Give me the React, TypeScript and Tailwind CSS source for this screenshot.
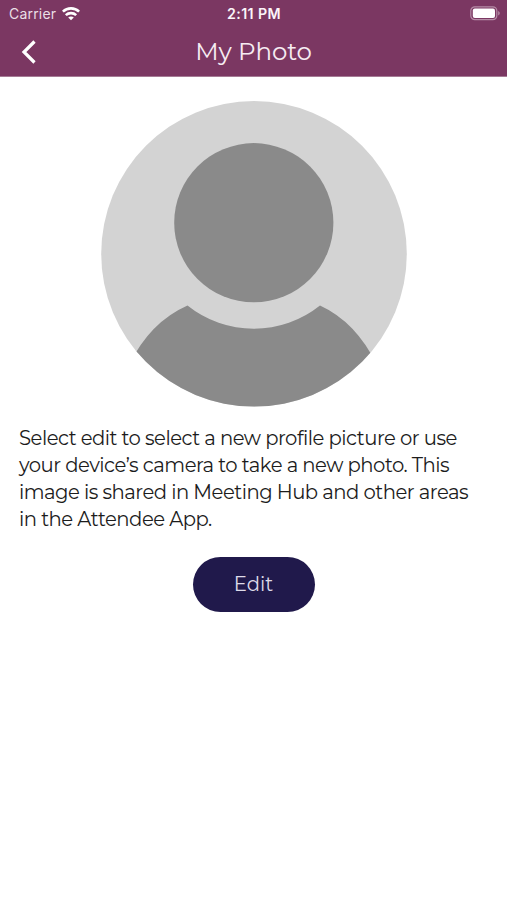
const description = [
  'Select edit to select a new profile picture or use',
  'your device’s camera to take a new photo. This',
  'image is shared in Meeting Hub and other areas',
  'in the Attendee App.',
]

function WifiIcon() {
  return (
    <svg width="18" height="14" viewBox="0 0 18 14" fill="none" stroke="white" strokeWidth="2.6">
      <path d="M0.9 4.6C5.4 0.3 12.6 0.3 17.1 4.6" />
      <path d="M3.8 8.1C6.7 5.4 11.3 5.4 14.2 8.1" />
      <path d="M9 13.3L6.2 10.5C7.8 9 10.2 9 11.8 10.5Z" fill="white" stroke="none" />
    </svg>
  )
}

function BatteryIcon() {
  return (
    <svg width="30" height="15" viewBox="0 0 30 15" fill="none">
      <rect x="0.8" y="0.8" width="26" height="12.9" rx="4" stroke="#b58ca6" strokeWidth="1.2" />
      <rect x="2.8" y="2.6" width="22.2" height="9.4" rx="2" fill="white" />
      <path d="M28.2 5C30.2 5.9 30.2 8.6 28.2 9.5Z" fill="#b58ca6" />
    </svg>
  )
}

function StatusBar() {
  return (
    <div className="grid h-[27px] grid-cols-3 items-center pl-[9px] pr-[7px] font-[Inter,sans-serif] text-white">
      <div className="flex items-center gap-[6px]">
        <span className="text-[14px] leading-none tracking-[0.2px] text-[#eadfe6]">Carrier</span>
        <WifiIcon />
      </div>
      <span className="-ml-px pt-px text-center text-[14.2px] font-semibold leading-none tracking-[0.4px] text-[#fbf5f9]">2:11 PM</span>
      <div className="flex justify-end">
        <BatteryIcon />
      </div>
    </div>
  )
}

function Avatar() {
  return (
    <svg className="mx-auto block" width="306" height="306" viewBox="0 0 306 306">
      <defs>
        <clipPath id="avatar">
          <circle cx="153" cy="152.8" r="152.8" />
        </clipPath>
      </defs>
      <g clipPath="url(#avatar)">
        <rect width="306" height="306" fill="#d3d3d3" />
        <circle cx="152.8" cy="121.7" r="79.6" fill="#8a8a8a" />
        <path d="M28 264Q49 221 86.5 204.5A106 106 0 0 0 219 204.5Q255 221 276 264V306H28Z" fill="#8a8a8a" />
      </g>
    </svg>
  )
}

export default function App() {
  return (
    <div className="h-[900px] w-[507px] overflow-hidden bg-white font-[Montserrat,Inter,sans-serif]">
      <header className="h-[77px] border-b border-[#a57b95] bg-[#7b3762]">
        <StatusBar />
        <div className="grid h-[49px] grid-cols-[48px_1fr_48px] items-center">
          <button className="pl-[21px]" aria-label="Back">
            <svg width="15" height="24" viewBox="0 0 15 24" fill="none" stroke="white" strokeWidth="3.2">
              <path d="M13.5 1.5L3 12L13.5 22.5" />
            </svg>
          </button>
          <h1 className="text-center text-[24.5px] leading-none tracking-[-0.1px] text-[#f6ecf2]">My Photo</h1>
        </div>
      </header>

      <main className="pt-6">
        <Avatar />
        <p className="mt-[18px] pl-[19px] text-[19.6px] leading-[27px] tracking-[-0.5px] text-[#1c1c1c]">
          {description.map((line) => (
            <span key={line} className="block whitespace-nowrap">{line}</span>
          ))}
        </p>
        <button className="mx-auto mt-6 flex h-[55px] w-[122px] items-center justify-center rounded-full bg-[#20194b] text-[19.6px] tracking-[0.1px] text-[#dedbe9]">
          Edit
        </button>
      </main>
    </div>
  )
}
